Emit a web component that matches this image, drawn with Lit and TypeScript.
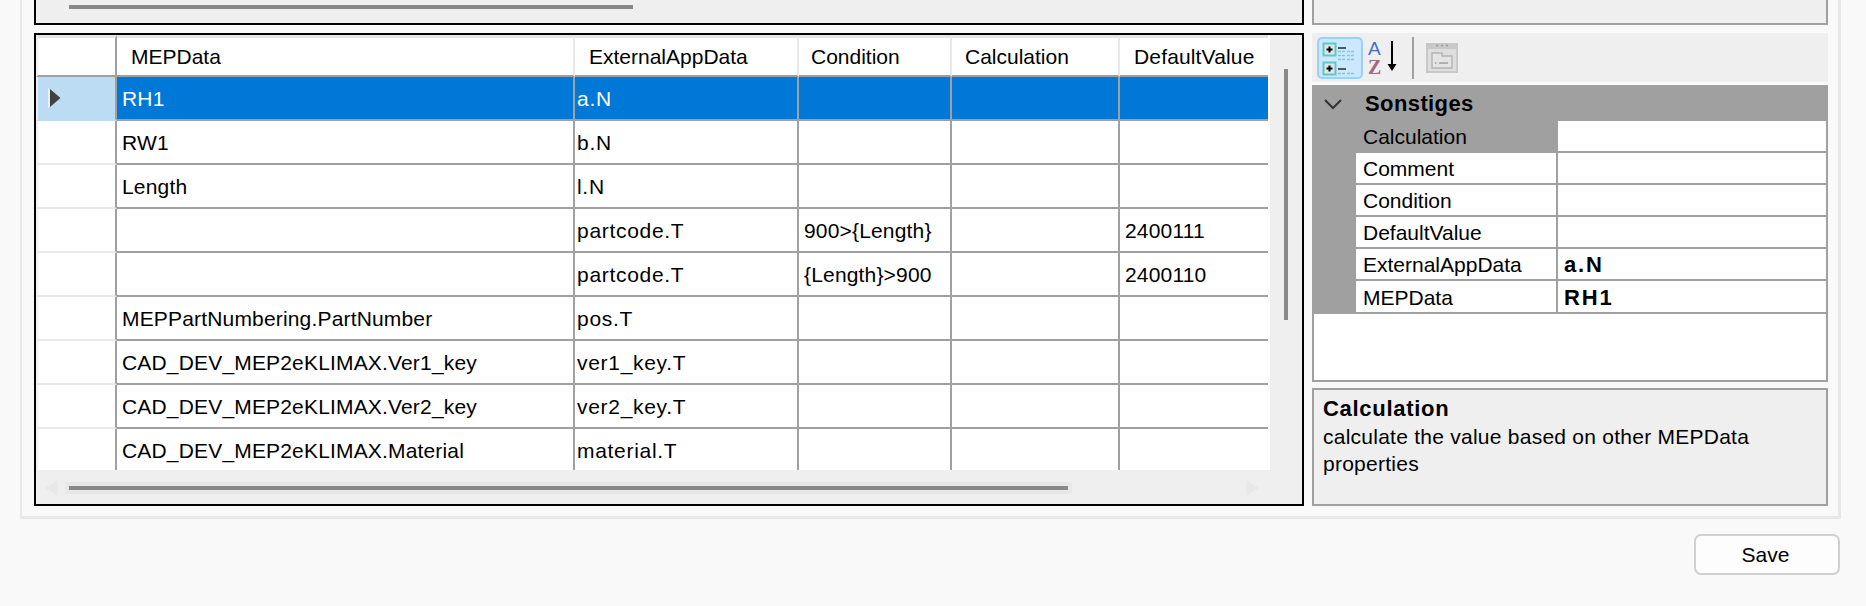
import { LitElement, html, css, svg } from "lit";
import { customElement } from "lit/decorators.js";

const COLS = ["MEPData", "ExternalAppData", "Condition", "Calculation", "DefaultValue"];
const ROWS: string[][] = [
  ["RH1", "a.N", "", "", ""],
  ["RW1", "b.N", "", "", ""],
  ["Length", "l.N", "", "", ""],
  ["", "partcode.T", "900>{Length}", "", "2400111"],
  ["", "partcode.T", "{Length}>900", "", "2400110"],
  ["MEPPartNumbering.PartNumber", "pos.T", "", "", ""],
  ["CAD_DEV_MEP2eKLIMAX.Ver1_key", "ver1_key.T", "", "", ""],
  ["CAD_DEV_MEP2eKLIMAX.Ver2_key", "ver2_key.T", "", "", ""],
  ["CAD_DEV_MEP2eKLIMAX.Material", "material.T", "", "", ""],
];
const PROPS: [string, string][] = [
  ["Calculation", ""],
  ["Comment", ""],
  ["Condition", ""],
  ["DefaultValue", ""],
  ["ExternalAppData", "a.N"],
  ["MEPData", "RH1"],
];

@customElement("app-root")
export class AppRoot extends LitElement {
  static styles = css`
    :host {
      display: block;
      width: 1866px;
      height: 606px;
      overflow: hidden;
      background: #f9f9f9;
      font-family: "Liberation Sans", Arial, sans-serif;
      font-size: 21px;
      color: #000;
    }
    .panel {
      width: 1821px;
      height: 519px;
      box-sizing: border-box;
      margin-left: 20px;
      border: 3px solid #e8e8e8;
      border-top: none;
      border-left-width: 2px;
      padding: 0 10px 10px 12px;
      display: grid;
      grid-template-columns: 1270px 516px;
      grid-template-rows: 25px 473px;
      column-gap: 8px;
      row-gap: 8px;
    }
    .top-left {
      background: #efefef;
      border: 2px solid #000;
      border-top: none;
      padding-top: 5px;
      box-sizing: border-box;
    }
    .top-thumb {
      width: 564px;
      height: 4px;
      margin-left: 33px;
      background: #888;
    }
    .top-right {
      background: #efefef;
      border: 2px solid #a0a0a0;
      border-top: none;
      box-sizing: border-box;
    }
    .grid-box {
      border: 2px solid #000;
      box-sizing: border-box;
      background: #efefef;
      display: flex;
      flex-direction: column;
    }
    .grid-main {
      display: flex;
      height: 437px;
    }
    .viewport {
      width: 1234px;
      height: 437px;
      background: #fff;
      overflow: hidden;
      flex: none;
      border-bottom: 2px solid #efefef;
      box-sizing: border-box;
    }
    .table {
      display: grid;
      grid-template-columns: 81px 458px 224px 153px 168px 148px;
      grid-template-rows: 42px;
      grid-auto-rows: 44px;
      width: 1232px;
      height: 435px;
      overflow: hidden;
    }
    .cell {
      box-sizing: border-box;
      display: flex;
      align-items: center;
      white-space: nowrap;
      overflow: hidden;
      border-right: 2px solid #a0a0a0;
      border-bottom: 2px solid #a0a0a0;
      padding: 2px 0 0 5px;
      letter-spacing: 0.17px;
    }
    .cell.col1 {
      padding-left: 2px;
      letter-spacing: 0.7px;
    }
    .cell.last {
      border-right: none;
    }
    .cell.head {
      border-top: 3px solid #e4e4e4;
      border-right-color: #e8e8e8;
      padding: 0 0 0 14px;
      letter-spacing: 0;
    }
    .cell.head.col2 {
      padding-left: 12px;
    }
    .cell.head.col3 {
      padding-left: 13px;
    }
    .cell.head.col4 {
      letter-spacing: 0.15px;
    }
    .cell.head.corner {
      border-right-color: #a0a0a0;
      border-bottom-color: #a0a0a0;
      border-left: 2px solid #efefef;
      padding: 0;
    }
    .cell.rowhead {
      border-right-color: #a0a0a0;
      border-bottom: 2px solid #e8e8e8;
      border-left: 2px solid #efefef;
      padding: 0;
    }
    .cell.rowhead.sel {
      background: #bbdcf3;
      border-bottom-color: #bbdcf3;
      padding-left: 10px;
    }
    .rowhead.sel svg {
      display: block;
    }
    .sel-cell {
      background: #0078d7;
      color: #fff;
    }
    .vtrack {
      flex: 1;
      padding: 34px 0 0 14px;
    }
    .vthumb {
      width: 4px;
      height: 251px;
      background: #888;
    }
    .hbar {
      flex: 1;
      display: flex;
      align-items: center;
    }
    .arrow {
      flex: none;
      display: block;
    }
    .arrow.left {
      margin-left: 9px;
    }
    .hthumb {
      margin-left: 11px;
      width: 999px;
      height: 4px;
      background: #888;
      box-shadow: 0 0 0 4px #e8e8e8;
    }
    .arrow.right {
      margin-left: 178px;
    }
    .side {
      display: flex;
      flex-direction: column;
    }
    .toolbar {
      height: 49px;
      background: #efefef;
      display: flex;
      align-items: center;
      padding-left: 5px;
      box-sizing: border-box;
      flex: none;
    }
    .toolbar svg {
      display: block;
      flex: none;
    }
    .cat-btn {
      width: 46px;
      height: 42px;
      box-sizing: border-box;
      background: #cce8ff;
      border: 2px solid #99d1ff;
      border-radius: 5px;
      display: flex;
      align-items: center;
      justify-content: center;
      flex: none;
    }
    .tb-sep {
      width: 2px;
      height: 42px;
      background: #a0a0a0;
      margin-right: 12px;
      flex: none;
    }
    .props {
      margin-top: 3px;
      height: 297px;
      flex: none;
      box-sizing: border-box;
      background: #fff;
      border: 2px solid #a0a0a0;
      border-top: none;
      display: flex;
      flex-direction: column;
    }
    .cat {
      height: 36px;
      flex: none;
      background: #a0a0a0;
      display: flex;
      align-items: center;
      font-weight: 700;
      font-size: 22px;
      letter-spacing: 0.4px;
      padding: 2px 0 0 10px;
      box-sizing: border-box;
    }
    .cat svg {
      display: block;
      margin-right: 23px;
    }
    .prow {
      display: grid;
      grid-template-columns: 42px 202px 1fr;
      height: 32px;
      flex: none;
    }
    .prow.end {
      height: 33px;
    }
    .gutter {
      background: #a0a0a0;
    }
    .plabel,
    .pval {
      box-sizing: border-box;
      border-bottom: 2px solid #a0a0a0;
      display: flex;
      align-items: center;
      white-space: nowrap;
      padding-top: 2px;
    }
    .plabel {
      border-right: 2px solid #a0a0a0;
      padding-left: 7px;
    }
    .plabel.active {
      background: #a0a0a0;
    }
    .pval {
      padding-left: 6px;
      font-weight: 700;
      font-size: 22px;
      letter-spacing: 1.8px;
    }
    .help {
      margin-top: 6px;
      flex: 1;
      box-sizing: border-box;
      background: #efefef;
      border: 2px solid #a0a0a0;
      padding: 4px 9px;
      line-height: 27px;
    }
    .help-title {
      font-weight: 700;
      font-size: 22px;
      letter-spacing: 0.7px;
      line-height: 29px;
    }
    .help-text {
      width: 470px;
      letter-spacing: 0.25px;
    }
    .footer {
      display: flex;
      justify-content: flex-end;
      padding: 15px 26px 0 0;
    }
    .save {
      width: 146px;
      height: 41px;
      box-sizing: border-box;
      background: #fdfdfd;
      border: 2px solid #d0d0d0;
      border-radius: 7px;
      font: inherit;
      color: #000;
      padding: 0 3px 0 0;
      text-align: center;
    }
  `;

  private triangle() {
    return html`<svg width="14" height="20" viewBox="0 0 14 20">
      <path d="M0 0V20L12 10Z" fill="#fff" opacity=".6"></path>
      <path d="M2 1V19L12.5 10Z" fill="#404040"></path>
    </svg>`;
  }

  private catIcon() {
    const box = (y: number) => svg`
      <rect x="2.500" y="${y + 0.5}" width="12" height="12" fill="#dfe6e6" stroke="#5cc8c8" stroke-width="2"></rect>
      <path d="M5.500 ${y + 6.5}H11.500M8.500 ${y + 3.5}V${y + 9.5}" stroke="#000" stroke-width="2"></path>`;
    return html`<svg width="38" height="36" viewBox="0 0 38 36">
      ${box(3)} ${box(22)}
      <path d="M17 8H25M17 29H25" stroke="#555" stroke-width="2"></path>
      <path d="M17 11.500H24M26 11.500H33M17 15.500H24M26 15.500H33M17 19.500H24M26 19.500H33M17 33.500H24M26 33.500H33"
        stroke="#7fc8d8" stroke-width="1.600" stroke-dasharray="3 1"></path>
    </svg>`;
  }

  private sortIcon() {
    return html`<svg width="49" height="40" viewBox="0 0 49 40">
      <text x="5" y="17" font-family="Liberation Sans" font-size="19" fill="#3d6fd0">A</text>
      <text x="5" y="36" font-family="Liberation Serif" font-size="20" font-weight="700" fill="#a06a78">Z</text>
      <path d="M29 3V31" stroke="#000" stroke-width="2"></path>
      <path d="M24.500 26H33.500L29 33Z" fill="#000"></path>
    </svg>`;
  }

  private pageIcon() {
    return html`<svg width="32" height="30" viewBox="0 0 32 30">
      <rect x="0" y="0" width="32" height="30" fill="#c8c8c8"></rect>
      <rect x="2" y="6" width="28" height="22" fill="#dedede"></rect>
      <path d="M10 2.500h2M15 2.500h2M20 2.500h2" stroke="#9a9a9a" stroke-width="1.400"></path>
      <path d="M6 13V25H26V13H16V10H6Z" fill="#e4e4e4" stroke="#b4b4b4" stroke-width="1.400"></path>
      <path d="M9 20h1.500M13 20h9" stroke="#a0a0a0" stroke-width="1.600"></path>
    </svg>`;
  }

  private chevron() {
    return html`<svg width="18" height="12" viewBox="0 0 18 12">
      <path d="M1 2L9 10L17 2" fill="none" stroke="#333" stroke-width="2"></path>
    </svg>`;
  }

  render() {
    return html`
      <div class="panel">
        <div class="top-left"><div class="top-thumb"></div></div>
        <div class="top-right"></div>
        <div class="grid-box">
          <div class="grid-main">
            <div class="viewport">
              <div class="table">
                <div class="cell head corner"></div>
                ${COLS.map(
                  (c, i) => html`<div class="cell head col${i} ${i === 4 ? "last" : ""}">${c}</div>`
                )}
                ${ROWS.map(
                  (r, ri) => html`
                    <div class="cell rowhead ${ri === 0 ? "sel" : ""}">
                      ${ri === 0 ? this.triangle() : ""}
                    </div>
                    ${r.map(
                      (v, i) =>
                        html`<div class="cell col${i} ${ri === 0 ? "sel-cell" : ""} ${i === 4 ? "last" : ""}">${v}</div>`
                    )}
                  `
                )}
              </div>
            </div>
            <div class="vtrack"><div class="vthumb"></div></div>
          </div>
          <div class="hbar">
            <svg class="arrow left" width="13" height="16" viewBox="0 0 13 16">
              <path d="M13 0V16L0 8Z" fill="#e8e8e8"></path>
            </svg>
            <div class="hthumb"></div>
            <svg class="arrow right" width="13" height="16" viewBox="0 0 13 16">
              <path d="M0 0V16L13 8Z" fill="#e8e8e8"></path>
            </svg>
          </div>
        </div>
        <div class="side">
          <div class="toolbar">
            <div class="cat-btn">${this.catIcon()}</div>
            <div class="sort">${this.sortIcon()}</div>
            <div class="tb-sep"></div>
            ${this.pageIcon()}
          </div>
          <div class="props">
            <div class="cat">${this.chevron()}<span>Sonstiges</span></div>
            ${PROPS.map(
              ([k, v], i) => html`
                <div class="prow ${i === PROPS.length - 1 ? "end" : ""}">
                  <div class="gutter"></div>
                  <div class="plabel ${i === 0 ? "active" : ""}">${k}</div>
                  <div class="pval">${v}</div>
                </div>
              `
            )}
          </div>
          <div class="help">
            <div class="help-title">Calculation</div>
            <div class="help-text">calculate the value based on other MEPData properties</div>
          </div>
        </div>
      </div>
      <div class="footer"><button class="save">Save</button></div>
    `;
  }
}
